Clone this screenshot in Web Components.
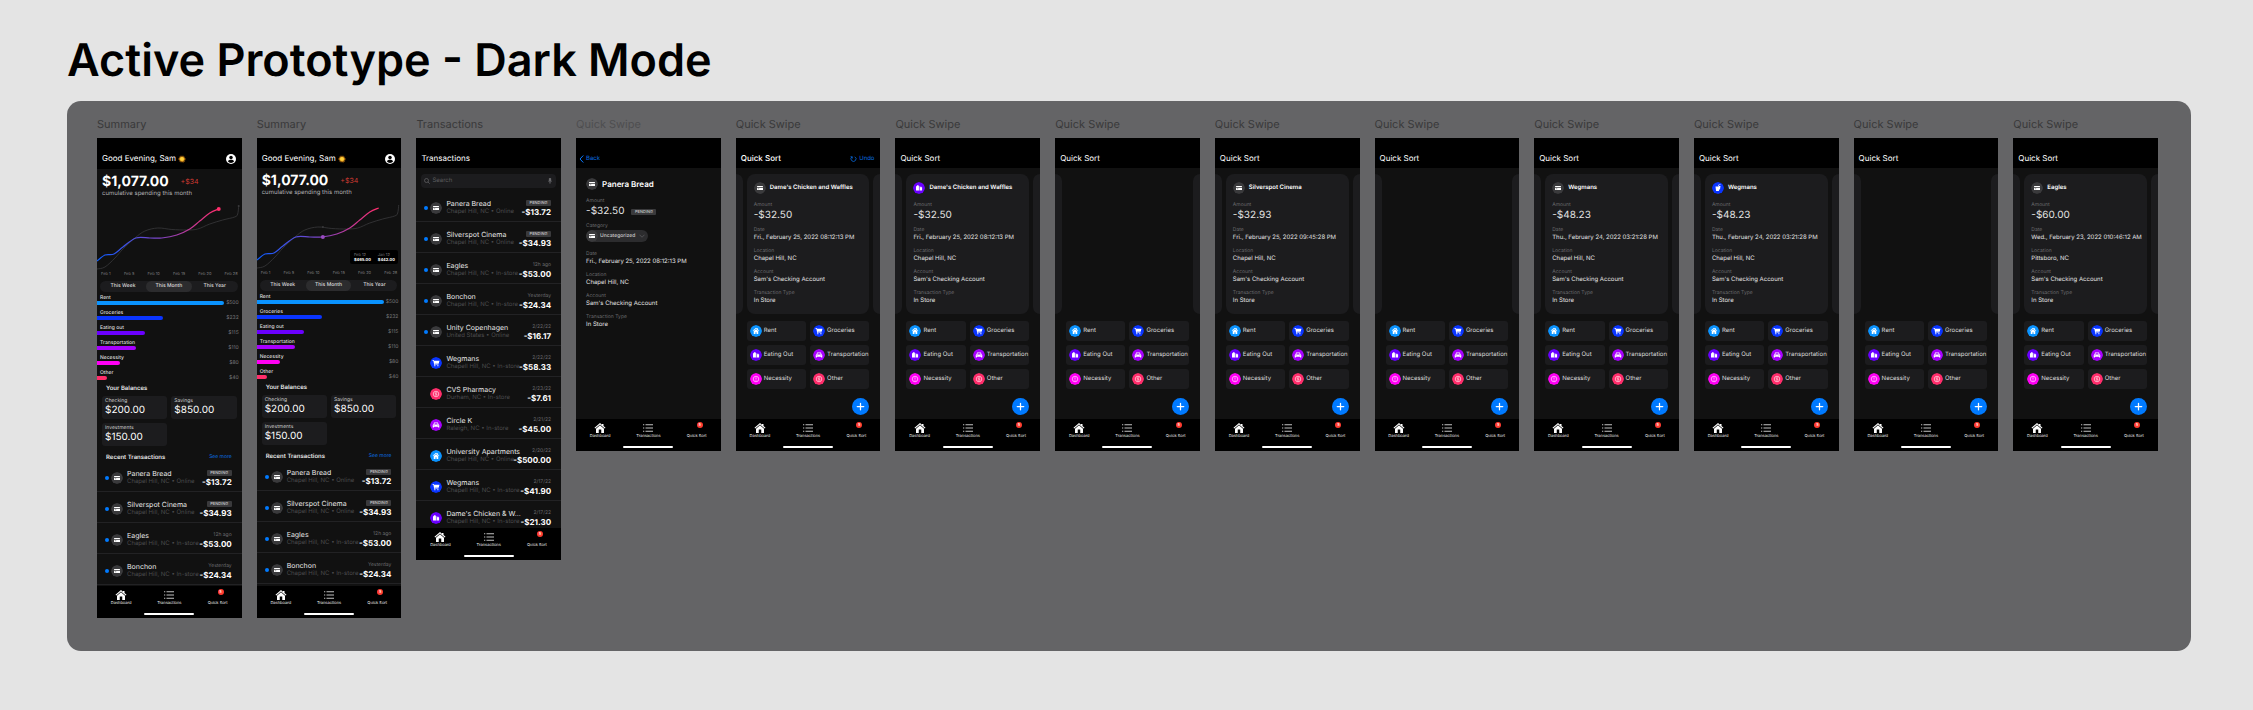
<!DOCTYPE html>
<html lang="en">
<head>
<meta charset="utf-8">
<title>Active Prototype - Dark Mode</title>
<style>
  html { background: #e4e4e4; }
  body { margin: 0; font-family: Inter, "Liberation Sans", sans-serif; color: #fff; text-rendering: geometricPrecision; }
</style>
</head>
<body>
<prototype-board heading="Active Prototype - Dark Mode">
  <art-board name="Summary"><summary-screen></summary-screen></art-board>
  <art-board name="Summary"><summary-screen compare></summary-screen></art-board>
  <art-board name="Transactions"><transactions-screen></transactions-screen></art-board>
  <art-board name="Quick Swipe" muted><detail-screen></detail-screen></art-board>
  <art-board name="Quick Swipe"><sort-screen undo merchant="Dame's Chicken and Waffles" icon="card" amount="-$32.50" date="Fri., February 25, 2022 08:12:13 PM"></sort-screen></art-board>
  <art-board name="Quick Swipe"><sort-screen merchant="Dame's Chicken and Waffles" icon="food" amount="-$32.50" date="Fri., February 25, 2022 08:12:13 PM"></sort-screen></art-board>
  <art-board name="Quick Swipe"><sort-screen></sort-screen></art-board>
  <art-board name="Quick Swipe"><sort-screen merchant="Silverspot Cinema" icon="card" amount="-$32.93" date="Fri., February 25, 2022 09:45:28 PM"></sort-screen></art-board>
  <art-board name="Quick Swipe"><sort-screen></sort-screen></art-board>
  <art-board name="Quick Swipe"><sort-screen merchant="Wegmans" icon="card" amount="-$48.23" date="Thu., February 24, 2022 03:21:28 PM"></sort-screen></art-board>
  <art-board name="Quick Swipe"><sort-screen merchant="Wegmans" icon="bag" amount="-$48.23" date="Thu., February 24, 2022 03:21:28 PM"></sort-screen></art-board>
  <art-board name="Quick Swipe"><sort-screen></sort-screen></art-board>
  <art-board name="Quick Swipe"><sort-screen merchant="Eagles" icon="card" amount="-$60.00" date="Wed., February 23, 2022 010:46:12 AM" place="Pittsboro, NC"></sort-screen></art-board>
</prototype-board>

<script>
const RESET = `
  *, *::before, *::after { box-sizing: border-box; }
  button, input, select { font: inherit; color: inherit; text-rendering: inherit; border: 0; margin: 0; padding: 0; background: none; min-width: 0; }
  a { color: inherit; text-decoration: none; }
  h1, h2, h3, p, ul, dl, dd { margin: 0; padding: 0; }
  ul { list-style: none; }
  svg { display: block; }
`;
function define(tag, css, render) {
  customElements.define(tag, class extends HTMLElement {
    connectedCallback() {
      if (this.shadowRoot) return;
      const root = this.attachShadow({ mode: 'open' });
      root.innerHTML = `<style>${RESET}${css}</style>${render(this)}`;
    }
  });
}
const attr = (el, name, fallback = '') => el.getAttribute(name) ?? fallback;

/* Board and frames */
define('prototype-board', `
  :host { display: block; padding: 33px 62px 59px 67px; }
  h1 { font-size: 45px; line-height: 54px; font-weight: 600; color: #000; margin-bottom: 14px; white-space: nowrap; }
  section { display: grid; grid-template-columns: repeat(13, minmax(0, 1fr)); align-items: start; gap: 15px; padding: 16px 33px 33px 30px; background: #646466; border-radius: 14px; }
`, el => `<h1>${attr(el, 'heading')}</h1><section><slot></slot></section>`);

define('art-board', `
  :host { display: block; min-width: 0; }
  h2 { font-size: 11px; line-height: 14px; font-weight: 400; color: #39393a; margin-bottom: 7px; }
  :host([muted]) h2 { color: #4e4e50; }
`, el => `<h2>${attr(el, 'name')}</h2><slot></slot>`);

/* Phone shell: header slot, body, tab bar */
define('phone-shell', `
  :host { display: flex; flex-direction: column; min-height: 313px; background: #111; font-size: 6px; line-height: 8px; overflow: hidden; white-space: nowrap; }
  header { height: var(--header, 30px); flex: none; background: #000; padding: 15px 6px 0 5px; }
  main { flex: 1; min-height: 0; overflow: hidden; }
  header div { display: flex; align-items: center; height: 11px; font-size: 8px; line-height: 11px; }
`, () => `<header><div><slot name="header"></slot></div></header><main><slot></slot></main><tab-bar></tab-bar>`);

define('tab-bar', `
  :host { display: block; flex: none; background: #000; padding: 4px 0 3px; height: 32px; }
  nav { display: grid; grid-template-columns: repeat(3, 1fr); font-size: 4px; line-height: 6px; text-align: center; color: #eee; }
  a { position: relative; display: block; }
  svg { width: 12px; height: 10px; margin: 0 auto; }
  .badge { position: absolute; top: -1px; left: 50%; width: 6px; height: 6px; border-radius: 50%; background: #ff3b30; color: #fff; font-size: 4px; line-height: 6px; }
  .home { width: 50px; height: 2px; border-radius: 1px; background: #fff; margin: 7px auto 0; }
`, () => `<nav>
  <a href="#dashboard"><svg viewBox="0 0 24 20" fill="#fff"><path d="M12 0 1 9.500l1.500 1.600L12 3l9.500 8.100L23 9.500l-4-3.400V2h-3v1.500z"/><path d="M12 4.500 4 11.400V20h5.500v-7h5v7H20v-8.600z"/></svg>Dashboard</a>
  <a href="#transactions"><svg viewBox="0 0 24 20" fill="none" stroke="#ccc" stroke-width="1.900"><path d="M2 3.500h2.500M7 3.500h15M2 10h2.500M7 10h15M2 16.500h2.500M7 16.500h15"/></svg>Transactions</a>
  <a href="#quick-sort"><svg viewBox="0 0 24 20"></svg>Quick Sort<span class="badge">5</span></a>
</nav><div class="home"></div>`);

/* Round category icon */
const GLYPHS = {
  card: ['#3a3a3c', '<path d="M7 8h10a1 1 0 0 1 1 1v1H6V9a1 1 0 0 1 1-1zM6 11.500h12V15a1 1 0 0 1-1 1H7a1 1 0 0 1-1-1z"/><path d="M7.500 13.500h3" stroke="#3a3a3c"/>'],
  rent: ['#0a93ff', '<path d="M12 5.500 5.500 11l.8 1 5.700-4.700 5.700 4.700.8-1-2.500-2.100V6.500h-1.600v1z"/><path d="m12 8.500-4.500 3.700V18H11v-3.500h2V18h3.500v-5.800z"/>'],
  cart: ['#0a35ff', '<path d="M5 6h2.600l.5 1.600H19l-1.700 6H9.300l.3 1.200H17V16H8.500L6.700 7.300H5z"/><circle cx="9.700" cy="17.400" r="1.200"/><circle cx="15.800" cy="17.400" r="1.200"/>'],
  food: ['#6a00ff', '<path d="M6 8.500h1.500l.5-2h3l.5 2H13V17H6z"/><path d="M13.500 10.500H15V9h1.500v1.500h1.700V17h-4.700z"/><path d="M12.600 9v8" stroke="#6a00ff" stroke-width=".7"/>'],
  car: ['#a800ff', '<path d="M8.300 7h7.400l1.500 4 1.300 1V17h-2.300v-1.500H7.800V17H5.500v-5l1.300-1zM9.300 8.500 8.500 11h7l-.8-2.500z" fill-rule="evenodd"/><g fill="#a800ff"><circle cx="8" cy="13.300" r=".9"/><circle cx="16" cy="13.300" r=".9"/></g>'],
  need: ['#ff00f5', '<circle cx="12" cy="12" r="5.500" fill="none" stroke="#fff" stroke-width="1.200"/><path d="M12 8.700V13M12 14v1.300" stroke="#fff" stroke-width="1.300"/>'],
  other: ['#ff2d6b', '<circle cx="12" cy="12" r="5.500" fill="none" stroke="#fff" stroke-width="1.200"/><path d="M13.800 10.300c-.5-1-3.500-1-3.500.3 0 1.500 3.500.9 3.500 2.500 0 1.400-3 1.500-3.700.3M12 8.500v7" fill="none" stroke="#fff" stroke-width=".9"/>'],
  bag: ['#0a35ff', '<path d="M7 9h7.500l-.6 9H8.200z"/><path d="m12 9 1-3.500 4-1 .3 1.200-3.200.9L13.500 9zM14 8h3l-1 7h-2z"/>']
};
define('category-icon', `
  :host { display: block; flex: none; width: 12px; height: 12px; border-radius: 50%; overflow: hidden; }
  svg { width: 12px; height: 12px; }
`, el => {
  const [color, path] = GLYPHS[attr(el, 'kind', 'card')];
  return `<svg viewBox="0 0 24 24" fill="#fff"><circle cx="12" cy="12" r="12" fill="${color}"/>${path}</svg>`;
});

define('pending-tag', `
  :host { display: block; width: 25px; height: 6px; border-radius: 1px; background: #3a3a3c; color: #c4c4c6; font-size: 4px; line-height: 6px; font-weight: 500; text-align: center; }
`, () => 'PENDING');

/* Transaction row */
define('transaction-row', `
  :host { display: grid; grid-template-columns: 4px 12px minmax(0, 1fr) auto; align-items: center; column-gap: 3px; height: 31px; padding: 3px 10px 0 8px; border-bottom: 1px solid #222224; }
  .dot { width: 4px; height: 4px; border-radius: 50%; }
  :host([unread]) .dot { background: #007aff; }
  category-icon { margin-left: -1px; }
  h3 { font-size: 7px; line-height: 9px; font-weight: 400; color: #e8e8e8; }
  p { font-size: 6px; line-height: 8px; color: #4c4c4e; }
  .side { display: grid; justify-items: end; }
  time { font-size: 5px; line-height: 9px; color: #6a6a6d; }
  pending-tag { margin: 1px 0 2px; }
  strong { font-size: 8px; line-height: 8px; font-weight: 700; color: #fff; }
`, el => `<span class="dot"></span><category-icon kind="${attr(el, 'icon', 'card')}"></category-icon>
  <div><h3>${attr(el, 'name')}</h3><p>${attr(el, 'place')}</p></div>
  <div class="side">${attr(el, 'when') ? `<time>${attr(el, 'when')}</time>` : '<pending-tag></pending-tag>'}<strong>${attr(el, 'amount')}</strong></div>`);

const ROWS = [
  ['Panera Bread', 'Chapel Hill, NC • Online', '', '-$13.72', 'card'],
  ['Silverspot Cinema', 'Chapel Hill, NC • Online', '', '-$34.93', 'card'],
  ['Eagles', 'Chapel Hill, NC • In-store', '12h ago', '-$53.00', 'card'],
  ['Bonchon', 'Chapel Hill, NC • In-store', 'Yesterday', '-$24.34', 'card'],
  ['Unity Copenhagen', 'United States • Online', '2/22/22', '-$16.17', 'card'],
  ['Wegmans', 'Chapell Hill, NC • In-store', '2/22/22', '-$58.33', 'cart'],
  ['CVS Pharmacy', 'Durham, NC • In-store', '2/23/22', '-$7.61', 'other'],
  ['Circle K', 'Raleigh, NC • In-store', '2/21/22', '-$45.00', 'car'],
  ['University Apartments', 'Chapel Hill, NC • Online', '2/20/22', '-$500.00', 'rent'],
  ['Wegmans', 'Chapell Hill, NC • In-store', '2/17/22', '-$41.90', 'cart'],
  ["Dame's Chicken &amp; W...", 'Chapell Hill, NC • In-store', '2/17/22', '-$21.30', 'food']
];
const rows = list => list.map(([name, place, when, amount, icon]) =>
  `<li><transaction-row name="${name}" place="${place}" when="${when}" amount="${amount}" icon="${icon}" ${icon === 'card' ? 'unread' : ''}></transaction-row></li>`).join('');

/* Spending chart */
const smooth = pts => pts.slice(1).reduce((d, p, i) => {
  const a = pts[i - 1] || pts[i], b = pts[i], n = pts[i + 2] || p;
  return d + `C${b[0] + (p[0] - a[0]) / 6} ${b[1] + (p[1] - a[1]) / 6} ${p[0] - (n[0] - b[0]) / 6} ${p[1] - (n[1] - b[1]) / 6} ${p[0]} ${p[1]}`;
}, `M${pts[0]}`);
const SPENT = [[0, 63], [8, 57], [17, 56], [26, 49], [39, 40], [53, 40], [65, 40], [80, 37], [93, 31], [103, 23], [113, 15], [122, 11]];
const BEFORE = [[0, 71], [8, 69], [18, 60], [26, 51], [38, 40], [48, 33], [61, 30], [75, 31.500], [90, 32], [101, 31], [113, 26], [126, 22], [138, 19], [141, 16], [142, 8]];
define('spend-chart', `
  :host { display: block; position: relative; }
  svg { width: 100%; height: 73px; }
  .axis { display: flex; justify-content: space-between; padding: 0 4px; font-size: 4px; line-height: 6px; color: #77777a; }
  .tip { position: absolute; right: 3px; top: 53px; width: 48px; height: 14px; border-radius: 2px; background: #000; display: grid; grid-template-columns: 1fr 1fr; justify-items: center; align-content: center; font-size: 4px; line-height: 5px; color: #77777a; }
  .tip b { display: block; color: #fff; font-weight: 700; line-height: 6px; }
`, el => {
  const compare = el.hasAttribute('compare');
  return `<svg viewBox="0 0 145 73" preserveAspectRatio="none" fill="none" role="img" aria-label="Cumulative spending">
    <defs><linearGradient id="g" gradientUnits="userSpaceOnUse" x1="0" y1="0" x2="122" y2="0"><stop offset="0" stop-color="#0a5cff"/><stop offset=".5" stop-color="#7b45c8"/><stop offset="1" stop-color="#ff2d6b"/></linearGradient></defs>
    <path d="${smooth(BEFORE)}" stroke="#39393b" stroke-width=".8"/>
    <path d="${smooth(SPENT)}" stroke="url(#g)" stroke-width="1.200"/>
    ${compare ? '<circle cx="66" cy="40" r="2" fill="#9a4cc0"/><circle cx="66" cy="30" r="1" fill="#39393b"/>' : '<circle cx="122" cy="11" r="2" fill="#ff2d6b"/><circle cx="142" cy="8" r="1" fill="#39393b"/>'}
  </svg>
  <div class="axis"><span>Feb 1</span><span>Feb 5</span><span>Feb 10</span><span>Feb 15</span><span>Feb 20</span><span>Feb 28</span></div>
  ${compare ? '<div class="tip"><span>Feb 12<b>$465.00</b></span><span>Jan 12<b>$442.00</b></span></div>' : ''}`;
});

define('spend-bar', `
  :host { display: block; font-size: 5px; line-height: 6px; font-weight: 500; color: #ddd; margin-bottom: 5px; }
  .label { padding-left: 3px; }
  .row { display: flex; justify-content: space-between; align-items: center; height: 4px; padding-right: 3px; color: #77777a; font-weight: 400; }
  .track { flex: 1; }
  .row span { width: 13px; text-align: right; }
  i { display: block; height: 4px; border-radius: 0 2px 2px 0; }
`, el => `<div class="label">${attr(el, 'label')}</div><div class="row"><div class="track"><i style="width:${attr(el, 'share')}%;background:${attr(el, 'color')}"></i></div><span>${attr(el, 'amount')}</span></div>`);

define('balance-card', `
  :host { display: block; height: 23px; padding: 2px 3px; border-radius: 3px; background: #1c1c1e; }
  p { font-size: 5px; line-height: 6px; color: #ccc; }
  strong { display: block; font-size: 10px; line-height: 13px; font-weight: 400; }
`, el => `<p>${attr(el, 'label')}</p><strong>${attr(el, 'amount')}</strong>`);

define('summary-screen', `
  :host { display: block; }
  phone-shell { height: 480px; --header: 31px; }
  :host([compare]) phone-shell { --header: 30px; }
  .hello { display: flex; align-items: center; gap: 2px; flex: 1; font-size: 8px; }
  .hello button { margin-left: auto; width: 10px; height: 10px; }
  .hello svg { width: 8px; height: 8px; }
  .hello button svg { width: 10px; height: 10px; }
  .total { display: flex; align-items: center; gap: 12px; padding: 5px 5px 0; font-size: 14px; line-height: 16px; font-weight: 700; }
  .total span { font-size: 7px; font-weight: 400; color: #d03a32; }
  .note { padding: 0 5px; font-size: 6px; line-height: 8px; color: #b0b0b2; }
  .span { display: grid; grid-template-columns: repeat(3, 1fr); margin: 4px 4px 3px 3px; height: 11px; border-radius: 6px; background: #1c1c1e; font-size: 5px; line-height: 11px; font-weight: 500; color: #ddd; }
  .span button { border-radius: 6px; }
  .span [aria-pressed=true] { background: #2c2c2e; }
  h3 { font-size: 6px; line-height: 8px; font-weight: 600; color: #e8e8e8; }
  .balances { padding: 0 5px; }
  .balances h3 { margin-bottom: 3px; padding-left: 4px; }
  .grid { display: grid; grid-template-columns: 1fr 1fr; gap: 4px; }
  .recent { display: flex; justify-content: space-between; padding: 0 10px 0 9px; margin-top: 8px; line-height: 7px; }
  .recent h3 { line-height: 7px; }
  .recent a { font-size: 5px; color: #0a6fe0; }
`, el => `<phone-shell>
  <div slot="header" class="hello"><span>Good Evening, Sam</span><svg viewBox="0 0 24 24"><path d="m12 0 1.500 5L17 1.500l-.5 5L21.500 4.500 18.500 9 24 9.500 19.500 12l4.500 3-5.500.500 3 4.500-5-1.500.5 4.500-3.500-3L12 24l-1.500-4.500-3.500 3 .5-4.500-5 1.500 3-4.500L0 15l4.500-3L0 9.500 5.500 9l-3-4.500 5 2-.5-5L10.500 5z" fill="#c77c12"/><circle cx="12" cy="12.200" r="6" fill="#ffd23c"/></svg>
    <button aria-label="Account"><svg viewBox="0 0 24 24"><circle cx="12" cy="12" r="12" fill="#fff"/><circle cx="12" cy="8.600" r="4.200"/><path d="M4.500 17.500C6.500 14.500 9 13.800 12 13.800s5.500.700 7.500 3.700C17.500 20 15 21.300 12 21.300S6.500 20 4.500 17.500z"/></svg></button></div>
  <div class="total">$1,077.00<span>+$34</span></div>
  <p class="note">cumulative spending this month</p>
  <spend-chart ${el.hasAttribute('compare') ? 'compare' : ''}></spend-chart>
  <div class="span"><button aria-pressed="false">This Week</button><button aria-pressed="true">This Month</button><button aria-pressed="false">This Year</button></div>
  <spend-bar label="Rent" share="99" color="#0a93ff" amount="$500"></spend-bar>
  <spend-bar label="Groceries" share="51" color="#0a35ff" amount="$232"></spend-bar>
  <spend-bar label="Eating out" share="37" color="#6a00ff" amount="$115"></spend-bar>
  <spend-bar label="Transportation" share="30" color="#a800ff" amount="$110"></spend-bar>
  <spend-bar label="Necessity" share="18" color="#ff00f5" amount="$80"></spend-bar>
  <spend-bar label="Other" share="8" color="#ff2d6b" amount="$40"></spend-bar>
  <div class="balances"><h3>Your Balances</h3><div class="grid">
    <balance-card label="Checking" amount="$200.00"></balance-card>
    <balance-card label="Savings" amount="$850.00"></balance-card>
    <balance-card label="Investments" amount="$150.00"></balance-card></div></div>
  <div class="recent"><h3>Recent Transactions</h3><a href="#transactions">See more</a></div>
  <ul>${rows(ROWS.slice(0, 4))}</ul>
</phone-shell>`);

define('transactions-screen', `
  :host { display: block; }
  phone-shell { height: 422px; }
  label { display: flex; align-items: center; gap: 2px; height: 14px; margin: 6px 5px 3px; padding: 0 3px; border-radius: 4px; background: #1c1c1e; }
  input { flex: 1; width: 0; font-size: 6px; line-height: 8px; outline: 0; }
  input::placeholder { color: #5c5c5f; opacity: 1; }
  svg { width: 6px; height: 6px; flex: none; }
`, () => `<phone-shell><span slot="header">Transactions</span>
  <label><svg viewBox="0 0 12 12" fill="none" stroke="#6a6a6d" stroke-width="1.300"><circle cx="5" cy="5" r="4"/><path d="m8 8 3.500 3.500"/></svg><input type="text" placeholder="Search" aria-label="Search"><svg viewBox="0 0 12 12" fill="none" stroke="#77777a"><rect x="4.500" y="0" width="3" height="7" rx="1.500" fill="#77777a"/><path d="M3 5.500C3 10 9 10 9 5.500M6 9v3"/></svg></label>
  <ul>${rows(ROWS)}</ul></phone-shell>`);

/* Labelled facts about one transaction */
define('detail-field', `
  :host { display: block; margin-bottom: 6px; }
  p { font-size: 5px; line-height: 7px; color: #6a6a6d; }
  .value { display: flex; align-items: center; gap: 7px; font-size: 6px; line-height: 8px; color: #e4e4e4; }
  :host([large]) { margin-bottom: 5px; }
  :host([large]) .value { font-size: 10px; line-height: 13px; }
`, el => `<p>${attr(el, 'label')}</p><div class="value"><slot></slot></div>`);

define('detail-screen', `
  :host { display: block; }
  phone-shell { height: 313px; }
  .back { display: flex; align-items: center; gap: 2px; font-size: 6px; color: #0a6fe0; margin-left: -2px; }
  .back svg { width: 5px; height: 8px; }
  .detail { padding: 10px; }
  .top { display: flex; align-items: center; gap: 4px; margin-bottom: 8px; }
  h3 { font-size: 8px; line-height: 12px; font-weight: 600; }
  .pick { display: flex; align-items: center; width: 62px; height: 12px; margin-bottom: 3px; border-radius: 6px; background: #2c2c2e; }
  .pick select { appearance: none; flex: 1; margin-left: 2px; font-size: 5px; line-height: 8px; font-weight: 500; color: #ccc; }
  .pick svg { width: 6px; height: 4px; margin-right: 3px; }
`, () => `<phone-shell>
  <a slot="header" class="back" href="#back"><svg viewBox="0 0 10 16" fill="none" stroke="#0a7aff" stroke-width="2"><path d="M8.500 1 2 8l6.500 7"/></svg>Back</a>
  <div class="detail"><div class="top"><category-icon></category-icon><h3>Panera Bread</h3></div>
    <detail-field label="Amount" large>-$32.50<pending-tag></pending-tag></detail-field>
    <detail-field label="Category"><span class="pick"><category-icon></category-icon><select aria-label="Category"><option>Uncategorized</option></select><svg viewBox="0 0 12 8" fill="none" stroke="#77777a"><path d="m1 1.500 5 5 5-5"/></svg></span></detail-field>
    <detail-field label="Date">Fri., February 25, 2022 08:12:13 PM</detail-field>
    <detail-field label="Location">Chapel Hill, NC</detail-field>
    <detail-field label="Account">Sam's Checking Account</detail-field>
    <detail-field label="Transaction Type">In Store</detail-field>
  </div></phone-shell>`);

define('category-button', `
  :host { display: block; min-width: 0; }
  button { display: flex; align-items: center; gap: 2px; width: 100%; height: 20px; padding: 0 3px; border-radius: 3px; background: #1c1c1e; color: #ddd; font-size: 6px; line-height: 8px; font-weight: 400; white-space: nowrap; }
`, el => `<button><category-icon kind="${attr(el, 'icon')}"></category-icon><slot></slot></button>`);

define('sort-screen', `
  :host { display: block; }
  phone-shell { height: 313px; }
  .bar { display: flex; flex: 1; justify-content: space-between; align-items: center; }
  :host([undo]) .bar { font-weight: 500; }
  .bar button { display: flex; align-items: center; gap: 2px; font-size: 6px; font-weight: 400; color: #0a6fe0; }
  .bar svg { width: 7px; height: 7px; }
  .deck { display: flex; gap: 4px; height: 140px; margin-top: 6px; }
  .peek { width: 7px; background: #1c1c1e; border-radius: 0 7px 7px 0; }
  .peek:last-child { border-radius: 7px 0 0 7px; }
  article { flex: 1; min-width: 0; }
  article.on { padding: 8px 7px; border-radius: 8px; background: #1c1c1e; }
  .top { display: flex; align-items: center; gap: 4px; margin-bottom: 8px; }
  h3 { font-size: 6px; line-height: 12px; font-weight: 600; }
  .grid { display: grid; grid-template-columns: 1fr 1fr; gap: 4px; margin: 7px 11px 9px; }
  .add { display: block; width: 17px; height: 17px; margin: 0 11px 0 auto; border-radius: 50%; background: #007aff; }
  .add svg { width: 17px; height: 17px; }
`, el => `<phone-shell>
  <div slot="header" class="bar"><span>Quick Sort</span>${el.hasAttribute('undo') ? '<button><svg viewBox="0 0 14 14" fill="none" stroke="#0a7aff" stroke-width="1.400"><path d="M4 3.800A5 5 0 1 0 9.500 3.500"/><path d="M4.500 7V3.500H1"/></svg>Undo</button>' : ''}</div>
  <div class="deck"><div class="peek"></div>${el.hasAttribute('merchant') ? `<article class="on">
    <div class="top"><category-icon kind="${attr(el, 'icon')}"></category-icon><h3>${attr(el, 'merchant')}</h3></div>
    <detail-field label="Amount" large>${attr(el, 'amount')}</detail-field>
    <detail-field label="Date">${attr(el, 'date')}</detail-field>
    <detail-field label="Location">${attr(el, 'place', 'Chapel Hill, NC')}</detail-field>
    <detail-field label="Account">Sam's Checking Account</detail-field>
    <detail-field label="Transaction Type">In Store</detail-field></article>` : '<article></article>'}<div class="peek"></div></div>
  <div class="grid">
    <category-button icon="rent">Rent</category-button><category-button icon="cart">Groceries</category-button>
    <category-button icon="food">Eating Out</category-button><category-button icon="car">Transportation</category-button>
    <category-button icon="need">Necessity</category-button><category-button icon="other">Other</category-button>
  </div>
  <button class="add" aria-label="Add"><svg viewBox="0 0 34 34" stroke="#fff" stroke-width="2.500" stroke-linecap="round"><path d="M17 10.500v13M10.500 17h13"/></svg></button>
</phone-shell>`);
</script>
</body>
</html>
